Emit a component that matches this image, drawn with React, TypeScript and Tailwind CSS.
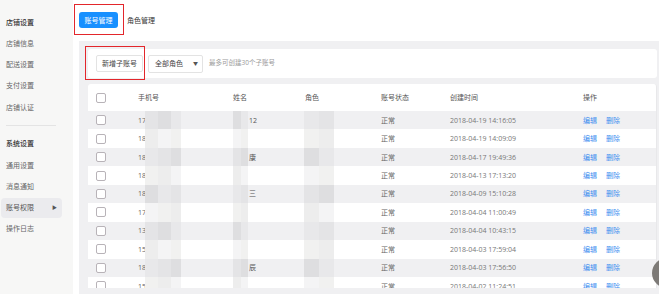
import React from 'react';

const rows = [
  { p: '17', name: '12', time: '2018-04-19 14:16:05' },
  { p: '18', name: '', time: '2018-04-19 14:09:09' },
  { p: '18', name: '康', time: '2018-04-17 19:49:36' },
  { p: '18', name: '', time: '2018-04-13 17:13:20' },
  { p: '18', name: '三', time: '2018-04-09 15:10:28' },
  { p: '17', name: '', time: '2018-04-04 11:00:49' },
  { p: '13', name: '', time: '2018-04-04 10:43:15' },
  { p: '15', name: '', time: '2018-04-03 17:59:04' },
  { p: '18', name: '辰', time: '2018-04-03 17:56:50' },
  { p: '15', name: '', time: '2018-04-02 11:24:51' },
];

const darkShades = ['bg-[#e4e4e6]', 'bg-[#dedee0]', 'bg-[#e8e8ea]'];
const lightShades = ['bg-[#f1f1f0]', 'bg-[#ededed]', 'bg-[#f4f4f5]'];

function Mosaic({ widths, odd, seed }: { widths: number[]; odd: boolean; seed: number }) {
  const shades = odd ? darkShades : lightShades;
  return (
    <div className="flex h-full">
      {widths.map((w, i) => (
        <div key={i} className={`h-full ${shades[(i + seed) % 3]}`} style={{ width: w }} />
      ))}
    </div>
  );
}

function Checkbox() {
  return <div className="w-[10px] h-[10px] rounded-[2px] border border-[#b8b3b8] bg-white" />;
}

function Sidebar() {
  const group1 = ['店铺信息', '配送设置', '支付设置', '店铺认证'];
  const group2 = ['通用设置', '消息通知'];
  return (
    <aside className="w-[73px] shrink-0 bg-[#f7f7f6] pt-[11.4px] text-[#666]">
      <div className="h-[21.25px] flex items-center pl-[6px] text-[#333] font-medium">店铺设置</div>
      {group1.map((t) => (
        <div key={t} className="h-[21.25px] flex items-center pl-[6px]">{t}</div>
      ))}
      <div className="ml-[6px] w-[50px] h-px bg-[#e4e4e4] mt-[7px] mb-[7.5px]" />
      <div className="h-[21.25px] flex items-center pl-[6px] text-[#333] font-medium">系统设置</div>
      {group2.map((t) => (
        <div key={t} className="h-[21.25px] flex items-center pl-[6px]">{t}</div>
      ))}
      <div className="h-[21.25px] flex items-center">
        <div className="ml-[1px] w-[61px] h-[20px] rounded-[4px] bg-[#ebebee] flex items-center justify-between pl-[5px] pr-[5px] text-[#555]">
          <span>账号权限</span>
          <span className="text-[5px]">▶</span>
        </div>
      </div>
      <div className="h-[21.25px] flex items-center pl-[6px]">操作日志</div>
    </aside>
  );
}

export default function App() {
  return (
    <div
      className="relative w-[659px] h-[294px] overflow-hidden flex bg-white text-[7px] leading-none text-[#666]"
      style={{ fontFamily: '"Open Sans", "Noto Sans CJK SC", sans-serif' }}
    >
      <Sidebar />
      <main className="flex-1 flex flex-col min-w-0">
        <div className="h-[41px] shrink-0 flex items-center pl-[6px] pb-[1px]">
          <div className="relative">
            <button className="w-[39px] h-[16px] rounded-[3px] bg-[#1890ff] text-white flex items-center justify-center">
              账号管理
            </button>
            <div className="absolute -left-[5px] -top-[8px] w-[50px] h-[31px] border-[1.5px] border-[#e3262b]" />
          </div>
          <span className="ml-[9px] text-[#333]">角色管理</span>
        </div>

        <div className="flex-1 min-h-0 ml-[6px] bg-[#f0f0f2] pl-[9px] pr-[2px] pt-[8px] pb-[6px] flex flex-col gap-[6px]">
          <div className="h-[29px] shrink-0 bg-white rounded-[3px] flex items-center pl-[8px]">
            <div className="relative">
              <button className="w-[47px] h-[17px] rounded-[2px] border border-[#e3e3e3] bg-white text-[#444] flex items-center justify-center">
                新增子账号
              </button>
              <div className="absolute -left-[11px] -top-[9px] w-[60px] h-[34px] border-[1.5px] border-[#e3262b]" />
            </div>
            <div className="ml-[5px] w-[55px] h-[18px] rounded-[2px] border border-[#e3e3e3] flex items-center justify-between pl-[6px] pr-[4px] text-[#444]">
              <span>全部角色</span>
              <span className="text-[5px] text-[#555]">▼</span>
            </div>
            <span className="ml-[6px] text-[6.5px] text-[#9a9a9a]">最多可创建30个子账号</span>
          </div>

          <div className="flex-1 min-h-0 overflow-hidden bg-white rounded-t-[3px] border-r border-[#e8e8ea]">
            <div className="grid grid-cols-[42px_95px_72px_76px_69px_133px_1fr] pl-[8px] h-[27px] items-center text-[#555]">
              <Checkbox />
              <span>手机号</span>
              <span>姓名</span>
              <span>角色</span>
              <span>账号状态</span>
              <span>创建时间</span>
              <span>操作</span>
            </div>
            {rows.map((r, i) => {
              const odd = i % 2 === 0;
              return (
                <div
                  key={i}
                  className={`grid grid-cols-[42px_95px_72px_76px_69px_133px_1fr] pl-[8px] h-[18.45px] items-center ${odd ? 'bg-[#f0f0f2]' : 'bg-white'}`}
                >
                  <Checkbox />
                  <div className="flex items-center h-full">
                    <span className="w-[7px]">{r.p}</span>
                    <Mosaic widths={[13, 13, 10]} odd={odd} seed={i} />
                  </div>
                  <div className="flex items-center h-full">
                    <Mosaic widths={[8, 7]} odd={odd} seed={i + 1} />
                    <span className="ml-[1px] text-[#555]">{r.name}</span>
                  </div>
                  <div className="flex items-center h-full -ml-[1px]">
                    <Mosaic widths={[15, 15]} odd={odd} seed={i + 2} />
                  </div>
                  <span>正常</span>
                  <span className="text-[#777]">{r.time}</span>
                  <div className="flex gap-[9px] text-[#3d8ef0]">
                    <span>编辑</span>
                    <span>删除</span>
                  </div>
                </div>
              );
            })}
          </div>
        </div>
      </main>
      <div className="absolute left-[652px] top-[258px] w-[30px] h-[30px] rounded-full bg-[#7d7a77]" />
    </div>
  );
}
